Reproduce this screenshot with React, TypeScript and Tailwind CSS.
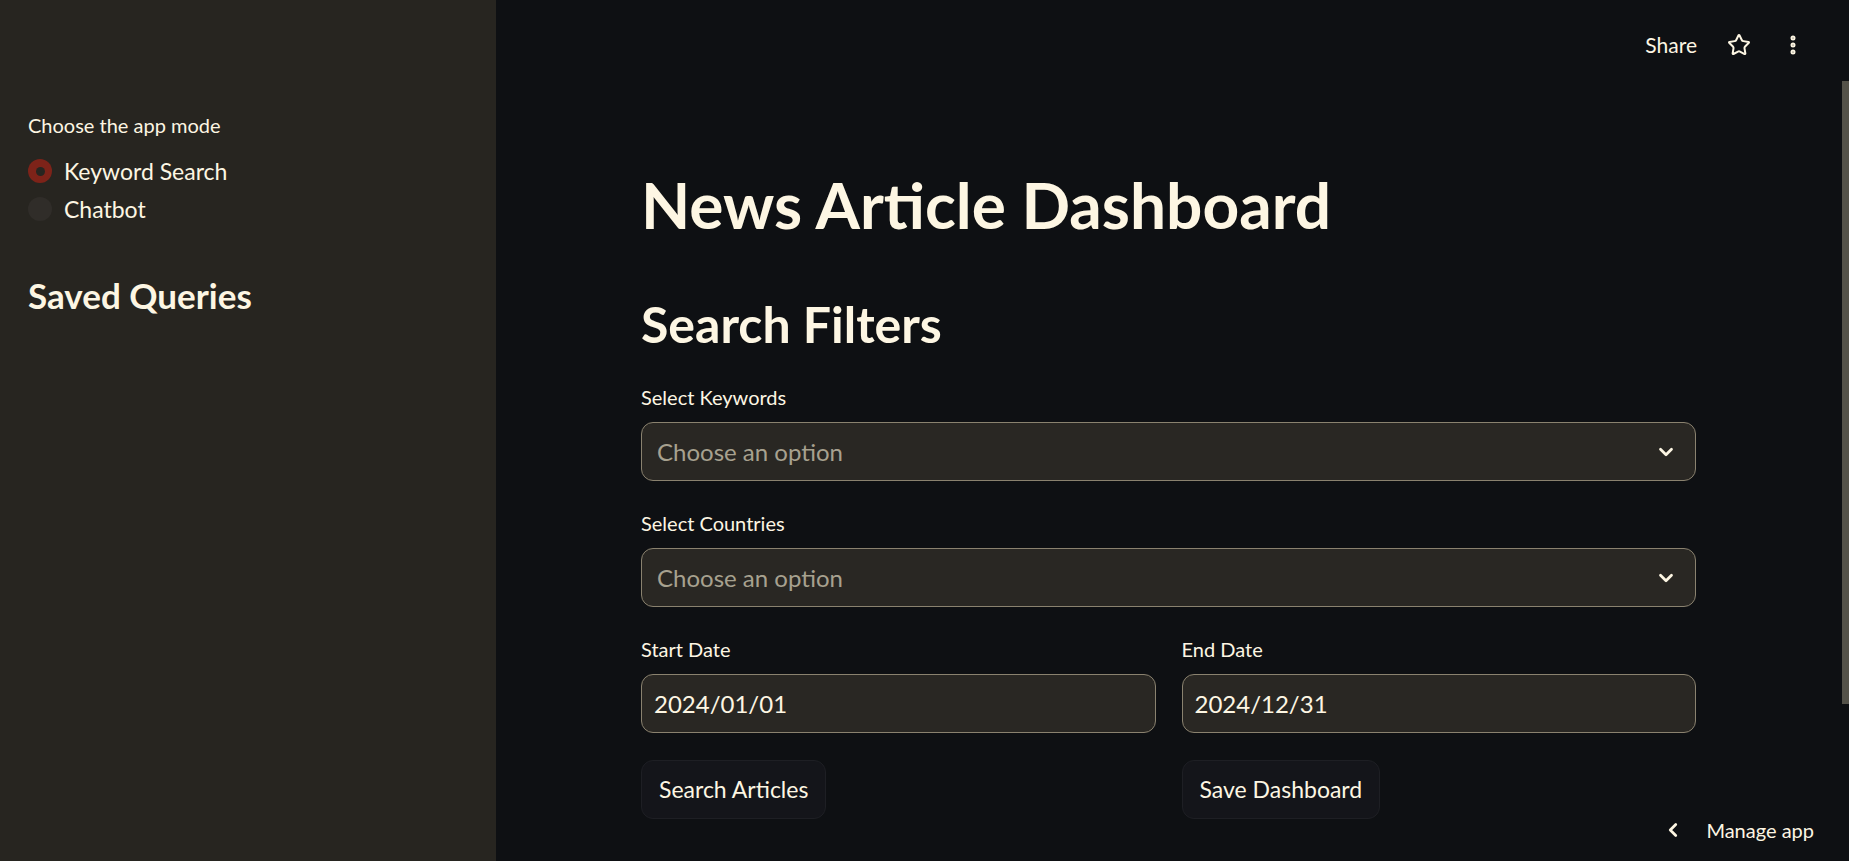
import React from "react";
import { ChevronDown, ChevronLeft, EllipsisVertical, Star } from "lucide-react";

const modes = ["Keyword Search", "Chatbot"];

function SelectBox({ label }: { label: string }) {
  return (
    <div className="flex flex-col">
      <label className="text-[20px] leading-[26px] mb-[12px]">{label}</label>
      <div className="flex h-[59px] items-center justify-between rounded-[12px] border border-[#8a826f] bg-[#292723] pl-[15px] pr-[18px]">
        <span className="text-[24px] text-[#a7a18f]">Choose an option</span>
        <ChevronDown size={22} strokeWidth={3} className="text-[#fdf6e3]" />
      </div>
    </div>
  );
}

function DateField({ label, value }: { label: string; value: string }) {
  return (
    <div className="flex flex-col">
      <label className="text-[20px] leading-[26px] mb-[12px]">{label}</label>
      <div className="flex h-[59px] items-center rounded-[12px] border border-[#8a826f] bg-[#292723] px-[12px]">
        <span className="text-[24px]">{value}</span>
      </div>
    </div>
  );
}

function Button({ children }: { children: React.ReactNode }) {
  return (
    <button className="h-[59px] rounded-[12px] border border-[#1e1f24] bg-[#14151a] px-[17px] text-[23px] text-[#fdf6e3]">
      {children}
    </button>
  );
}

export default function App() {
  const mode = "Keyword Search";

  return (
    <div className="flex h-[861px] w-full overflow-hidden bg-[#0e1013] font-['Lato',sans-serif] text-[#fdf6e3]">
      <aside className="w-[496px] shrink-0 bg-[#272520] px-[28px] pt-[112px]">
        <p className="text-[20px] leading-[26px]">Choose the app mode</p>
        <div className="mt-[18px] flex flex-col gap-[8px]">
          {modes.map((m) => (
            <div key={m} className="flex h-[30px] items-center gap-[12px]">
              {m === mode ? (
                <span className="flex h-[24px] w-[24px] items-center justify-center rounded-full bg-[#7d2319]">
                  <span className="h-[9px] w-[9px] rounded-full bg-[#272520]" />
                </span>
              ) : (
                <span className="h-[24px] w-[24px] rounded-full bg-[#302d29]" />
              )}
              <span className="text-[23px]">{m}</span>
            </div>
          ))}
        </div>
        <h2 className="mt-[50px] text-[35px] font-bold leading-[42px]">Saved Queries</h2>
      </aside>

      <main className="relative flex-1">
        <header className="flex h-[90px] items-center justify-end pr-[44px]">
          <span className="text-[21px]">Share</span>
          <Star size={24} strokeWidth={2} className="ml-[30px]" />
          <EllipsisVertical size={24} strokeWidth={3} className="ml-[30px]" />
        </header>

        <div className="ml-[145px] w-[1055px]">
          <h1 className="mt-[78px] text-[64px] font-bold leading-[74px]">News Article Dashboard</h1>
          <h2 className="mt-[52px] text-[50px] font-bold leading-[60px]">Search Filters</h2>

          <div className="mt-[30px] flex flex-col gap-[29px]">
            <SelectBox label="Select Keywords" />
            <SelectBox label="Select Countries" />
            <div className="grid grid-cols-2 gap-x-[26px] gap-y-[27px]">
              <DateField label="Start Date" value="2024/01/01" />
              <DateField label="End Date" value="2024/12/31" />
              <div>
                <Button>Search Articles</Button>
              </div>
              <div>
                <Button>Save Dashboard</Button>
              </div>
            </div>
          </div>
        </div>

        {/* overlay scrollbar thumb */}
        <div className="absolute right-0 top-[81px] h-[623px] w-[7px] bg-[#545249]" />

        <div className="absolute bottom-[16px] right-[35px] flex items-center gap-[22px]">
          <ChevronLeft size={22} strokeWidth={3} />
          <span className="text-[20px]">Manage app</span>
        </div>
      </main>
    </div>
  );
}
